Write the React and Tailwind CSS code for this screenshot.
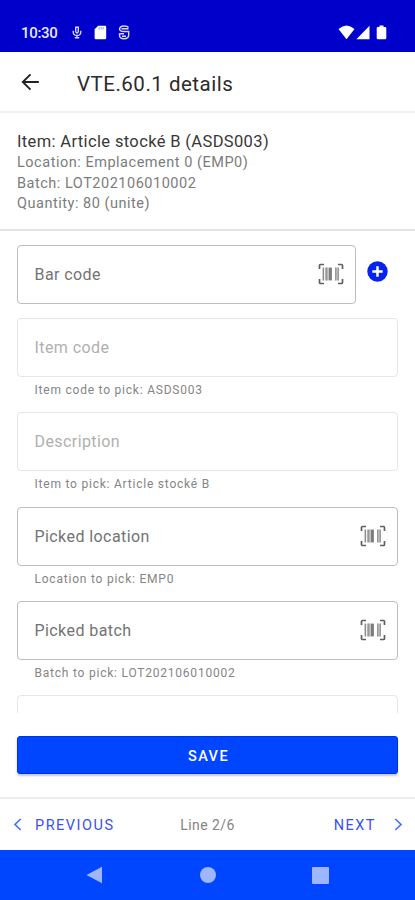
import React from 'react';

const BarcodeIcon = () => (
  <svg width="26" height="22" viewBox="0 0 26 22" fill="none" className="mb-px shrink-0">
    <path
      d="M6 1.500H2.500Q1.500 1.500 1.500 2.500V6M20 1.500h3.500q1 0 1 1V6M6 20.500H2.500q-1 0-1-1V16M20 20.500h3.500q1 0 1-1V16"
      stroke="#606060"
      strokeWidth="1.700"
    />
    <path d="M5.300 4.600v12.800" stroke="#8c8c8c" strokeWidth="1.400" />
    <path d="M8.600 4.600v12.800M18.900 4.600v12.800" stroke="#b4b4b4" strokeWidth="3.600" />
    <path d="M8.500 4.600v12.800M17.500 4.600v12.800M20.500 4.600v12.800" stroke="#999" strokeWidth="1" />
    <path d="M12.300 4.600v12.800" stroke="#7c7c7c" strokeWidth="3.200" />
  </svg>
);

const StatusBar = () => (
  <header className="flex h-[52px] shrink-0 items-center bg-[#0000cb] pt-[13px] pl-[21px] pr-[28px] text-white">
    <span className="w-[51px] pt-px text-[15px] font-medium tracking-[-0.300px] text-[#e8e8ff]">10:30</span>
    <svg width="10" height="13" viewBox="0 0 10 13" fill="none" stroke="#d8d8ff" strokeWidth="1.400">
      <path d="M3.700 5V1.200h2.600V5M1.200 4.800Q.8 9.500 5 9.500T8.800 4.800M3.200 5.300 5 7l1.800-1.700M5 9.500v2.300M2.800 11.800h4.400" />
    </svg>
    <svg width="13" height="15" viewBox="0 0 13 15" className="ml-[12px]">
      <path d="M4.200 .7H11q1.200 0 1.200 1.200V13q0 1.200-1.200 1.200H1.800Q.6 14.200 .6 13V4.300z" fill="#fff" />
      <path d="M5.200 2v2.600M7.200 2v2.600M9.200 2v2.600" stroke="#8888e8" strokeWidth=".8" />
    </svg>
    <svg width="12" height="15" viewBox="0 0 12 15" fill="none" stroke="#d8d8ff" strokeWidth="1.400" className="ml-[11px]">
      <path d="M10.500 2.500Q9.500 1 6 1T1.500 3.800Q1.500 6.500 6 6.500h4.700V9.800q0 4-4.700 4T1.500 9.800V8.300M3.500 3.700h7M1.500 8.700h4.500M4 11.200h4" />
    </svg>
    <svg width="17" height="15" viewBox="0 0 17 15" className="ml-auto">
      <path d="M.5 4Q8.500-3.200 16.500 4L8.500 14.200z" fill="#fff" />
    </svg>
    <svg width="14" height="15" viewBox="0 0 14 15" className="ml-px">
      <path d="M13.500 .8v13.400H.4z" fill="#fff" />
    </svg>
    <svg width="11" height="15" viewBox="0 0 11 15" className="ml-[6px]">
      <path d="M3.500 .5h4v1.400H9q1.300 0 1.300 1.300v9.800q0 1.200-1.300 1.200H2Q.7 14.200 .7 13V3.200Q.7 1.900 2 1.900h1.500z" fill="#fff" />
    </svg>
  </header>
);

const AppBar = () => (
  <div className="flex h-[61px] shrink-0 items-center border-b-2 border-[#efefef] pl-[21px]">
    <svg width="19" height="18" viewBox="0 0 19 18" fill="none" stroke="#222" strokeWidth="1.900">
      <path d="M9.500 1.300 1.800 9l7.700 7.700M1.800 9h16" />
    </svg>
    <h1 className="ml-[37px] mt-[5px] text-[20.500px] tracking-[0.500px] text-[#2b2b2b]">VTE.60.1 details</h1>
  </div>
);

const ItemSummary = () => (
  <section className="h-[118px] shrink-0 border-b-2 border-[#e2e2e2] pt-[19px] pl-[17px] text-[14.500px] leading-[20.500px] tracking-[0.520px] text-[#7c7c7c]">
    <p className="mb-[0.500px] text-[16.500px] leading-[20.500px] tracking-[0.360px] text-[#383838]">
      Item: Article stocké B (ASDS003)
    </p>
    <p>Location: Emplacement 0 (EMP0)</p>
    <p>Batch: LOT202106010002</p>
    <p>Quantity: 80 (unite)</p>
  </section>
);

const Field = ({ label, helper, scan, disabled }) => (
  <div className="w-full">
    <div
      className={`flex h-[59px] items-center justify-between rounded-[4px] pl-[16.500px] pr-[11px] text-[16px] tracking-[0.420px] ${
        disabled ? 'border border-[#e6e6e6] text-[#b0b0b0]' : 'border-[1.500px] border-[#bdbdbd] text-[#737373]'
      }`}
    >
      <span>{label}</span>
      {scan && <BarcodeIcon />}
    </div>
    {helper && (
      <p className="h-[35px] pl-[17.500px] pt-[4px] text-[12px] leading-[18px] tracking-[0.780px] text-[#858585]">{helper}</p>
    )}
  </div>
);

const readOnlyFields = [
  { label: 'Item code', helper: 'Item code to pick: ASDS003' },
  { label: 'Description', helper: 'Item to pick: Article stocké B' },
];

const scanFields = [
  { label: 'Picked location', helper: 'Location to pick: EMP0' },
  { label: 'Picked batch', helper: 'Batch to pick: LOT202106010002' },
];

const PickForm = () => (
  <main className="h-[482px] shrink-0 overflow-hidden px-[17px] pt-[14px]">
    <div className="mb-[14px] flex">
      <div className="w-[339px] shrink-0">
        <Field label="Bar code" scan />
      </div>
      <button className="ml-[11px] mt-[16px] h-[21px] w-[21px]" aria-label="Add">
        <svg width="21" height="21" viewBox="0 0 21 21">
          <circle cx="10.500" cy="10.500" r="10.200" fill="#0622f0" />
          <path d="M10.500 5.300v10.400M5.300 10.500h10.400" stroke="#fff" strokeWidth="2.500" />
        </svg>
      </button>
    </div>
    {readOnlyFields.map((field) => (
      <Field key={field.label} {...field} disabled />
    ))}
    <div className="pt-px">
      {scanFields.map((field) => (
        <Field key={field.label} {...field} scan />
      ))}
      <Field disabled />
    </div>
  </main>
);

const LineNav = () => (
  <nav className="flex h-[53px] shrink-0 items-center justify-between border-t-2 border-[#ededed] px-[12px] text-[14.500px] text-[#3a50f0]">
    <button className="flex w-[120px] items-center gap-[13px] tracking-[1.500px]">
      <svg width="9" height="13" viewBox="0 0 9 13" fill="none" stroke="#4774f8" strokeWidth="1.700" className="ml-px shrink-0">
        <path d="M7.700 1 2 6.500 7.700 12" />
      </svg>
      <span className="pt-[2px]">PREVIOUS</span>
    </button>
    <span className="pt-px text-[14px] tracking-[0.450px] text-[#858585]">Line 2/6</span>
    <button className="flex w-[120px] items-center justify-end gap-[18px] tracking-[1.500px]">
      <span className="pt-[2px]">NEXT</span>
      <svg width="9" height="13" viewBox="0 0 9 13" fill="none" stroke="#4774f8" strokeWidth="1.700" className="shrink-0">
        <path d="M1.300 1 7 6.500 1.300 12" />
      </svg>
    </button>
  </nav>
);

const SystemNav = () => (
  <div className="flex h-[50px] shrink-0 items-center bg-[#0045ff] pl-[86px]">
    <svg width="17" height="18" viewBox="0 0 17 18">
      <path d="M.5 9 16 .8v16.400z" fill="#9db6ff" />
    </svg>
    <div className="ml-[97px] h-4 w-4 rounded-full bg-[#9db6ff]" />
    <div className="ml-[96px] h-[17px] w-[17px] rounded-[1px] bg-[#9db6ff]" />
  </div>
);

const App = () => (
  <div className="flex h-[900px] w-[415px] flex-col overflow-hidden bg-white font-['Roboto',sans-serif]">
    <StatusBar />
    <AppBar />
    <ItemSummary />
    <PickForm />
    <div className="h-[84px] shrink-0 px-[17px] pt-[23px]">
      <button className="h-[38px] w-full rounded-[3px] border border-[#002df0] bg-[#0045ff] pt-[3px] pl-[2px] text-[14.500px] font-medium tracking-[1.400px] text-white shadow-[0_2px_2px_rgba(0,0,80,0.220)]">
        SAVE
      </button>
    </div>
    <LineNav />
    <SystemNav />
  </div>
);

export default App;
